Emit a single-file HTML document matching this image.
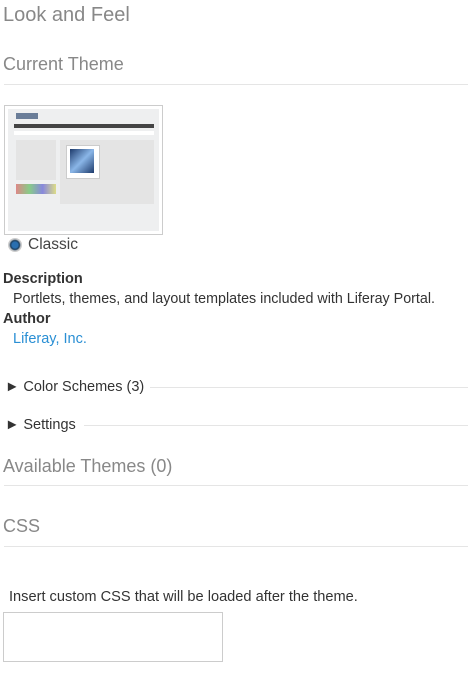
<!DOCTYPE html>
<html><head><style>
body{margin:0;background:#fff;font-family:"Liberation Sans",sans-serif;width:473px;height:674px;overflow:hidden;position:relative;color:#333}
.a{position:absolute}
h1{position:absolute;margin:0;font-weight:normal;color:#888}
.hr{position:absolute;left:4px;width:464px;height:1px;background:#e5e5e5}
</style></head><body>
<h1 style="left:3px;top:4px;font-size:20px">Look and Feel</h1>
<h1 style="left:3px;top:54px;font-size:18px">Current Theme</h1>
<div class="hr" style="top:84px"></div>
<div class="a" style="left:4px;top:105px;width:157px;height:128px;border:1px solid #ccc;background:#fff">
 <div class="a" style="left:3px;top:3px;width:151px;height:122px;background:#eeeff0">
  <div class="a" style="left:8px;top:4px;width:22px;height:6px;background:#6a7d98"></div>
  <div class="a" style="left:6px;top:15px;width:140px;height:4px;background:#444"></div>
  <div class="a" style="left:6px;top:22px;width:140px;height:4px;background:#fff"></div>
  <div class="a" style="left:8px;top:31px;width:40px;height:40px;background:#e4e4e4"></div>
  <div class="a" style="left:52px;top:31px;width:94px;height:64px;background:#e4e4e4"></div>
  <div class="a" style="left:58px;top:36px;width:32px;height:32px;background:#fff;border:1px solid #ccc"></div>
  <div class="a" style="left:62px;top:40px;width:24px;height:24px;background:linear-gradient(135deg,#1d3a6b,#8ab6e8 50%,#1d3a6b)"></div>
  <div class="a" style="left:8px;top:75px;width:40px;height:10px;background:linear-gradient(90deg,#d88,#8c8,#88d,#dd8)"></div>
 </div>
</div>
<div class="a" style="left:8px;top:238px;width:14px;height:14px;border-radius:50%;background:radial-gradient(circle,#2a6fb0 30%,#1a3c5c 45%,#ccc 60%)"></div>
<div class="a" style="left:28px;top:236px;font-size:15.5px;color:#444">Classic</div>
<div class="a" style="left:3px;top:271px;font-size:14.5px;font-weight:bold">Description</div>
<div class="a" style="left:13px;top:291px;font-size:14.3px">Portlets, themes, and layout templates included with Liferay Portal.</div>
<div class="a" style="left:3px;top:311px;font-size:14.5px;font-weight:bold">Author</div>
<div class="a" style="left:13px;top:331px;font-size:14.5px;color:#2a8fd4">Liferay, Inc.</div>
<div class="a" style="left:5px;top:379px;font-size:14.5px">► Color Schemes (3)</div>
<div class="hr" style="top:387px;left:150px;width:318px"></div>
<div class="a" style="left:5px;top:417px;font-size:14.5px">► Settings</div>
<div class="hr" style="top:425px;left:84px;width:384px"></div>
<h1 style="left:3px;top:456px;font-size:18px">Available Themes (0)</h1>
<div class="hr" style="top:485px"></div>
<h1 style="left:3px;top:516px;font-size:18px">CSS</h1>
<div class="hr" style="top:546px"></div>
<div class="a" style="left:9px;top:589px;font-size:14.6px">Insert custom CSS that will be loaded after the theme.</div>
<div class="a" style="left:3px;top:612px;width:218px;height:48px;border:1px solid #ccc"></div>
</body></html>
